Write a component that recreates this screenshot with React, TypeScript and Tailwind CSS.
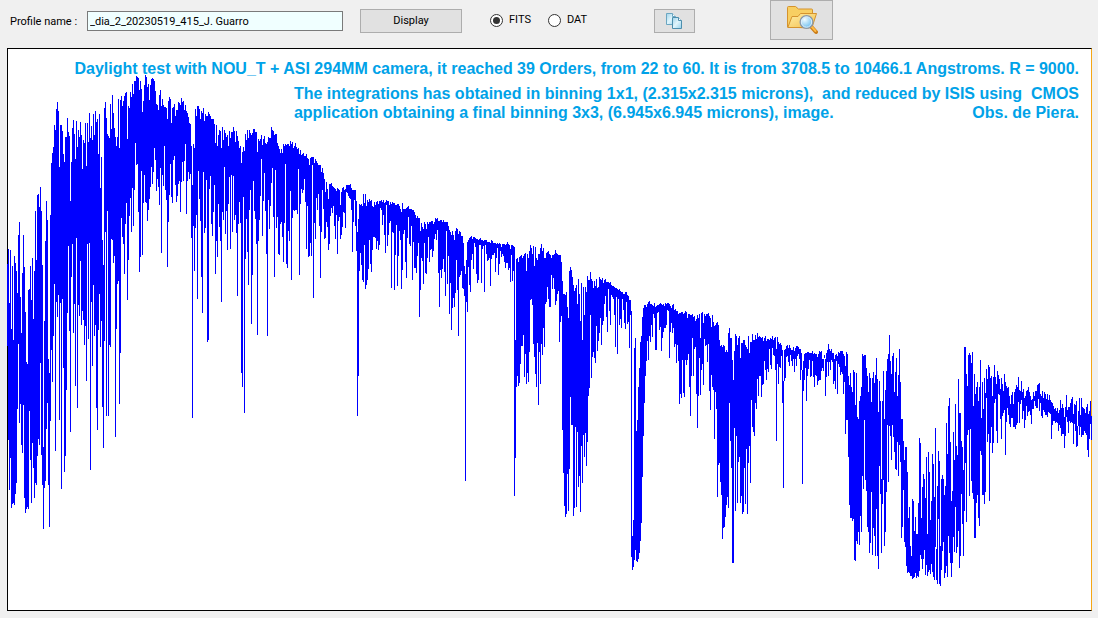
import React, { useState } from "react";

const START_X = 7;

// One "low,high" pair of y values for each column of the spectrum.
const SPECTRUM = `
264,346 249,440 303,490 250,458 329,508 266,504 340,503 256,505 263,494 271,483
293,409 235,344 222,423 297,404 333,445 273,453 235,405 267,498 312,513 362,509
364,507 290,509 289,411 266,460 300,503 258,443 319,468 271,498 211,483 260,485
195,456 194,439 207,445 187,363 211,455 265,485 447,529 321,488 241,481 201,429
220,403 359,485 373,527 215,421 163,350 153,382 147,336 125,284 130,451 109,302
102,317 111,295 167,420 125,303 125,489 131,299 154,368 162,472 137,456 137,390
118,313 132,246 136,331 201,432 162,277 128,244 120,333 134,304 159,386 121,238
147,408 130,305 137,316 122,261 135,325 169,311 140,320 143,345 123,326 166,381
123,244 142,339 113,243 138,470 126,302 140,366 114,285 135,336 111,325 122,408
119,430 154,330 114,294 188,347 157,321 240,407 265,448 108,341 102,232 118,416
134,211 136,416 138,345 104,347 129,239 95,240 113,263 128,256 137,437 146,329
137,284 99,281 148,404 100,353 96,218 106,237 101,244 96,274 93,224 92,203
139,300 106,260 108,216 92,198 97,232 84,188 94,226 81,190 81,143 76,165
77,164 78,212 90,272 81,257 89,171 112,255 101,203 85,175 75,202 77,203
87,221 84,210 100,199 85,187 79,167 78,184 79,172 81,148 91,160 104,191
105,179 110,187 95,205 90,168 106,253 99,175 105,186 107,146 107,190 108,200
119,267 101,222 97,195 99,164 123,197 108,203 107,160 104,156 116,185 110,202
110,196 102,184 103,181 105,212 98,182 102,162 101,181 110,161 105,144 111,214
113,181 117,172 123,179 124,174 146,238 185,418 144,226 148,271 109,228 116,215
106,299 106,171 109,199 119,221 111,277 113,313 108,172 121,233 114,228 116,180
116,342 112,340 114,189 116,176 119,224 119,236 119,212 124,185 143,274 125,241
146,257 135,204 130,227 131,241 148,302 127,212 140,220 130,167 133,234 137,211
135,250 146,204 131,177 138,249 132,175 132,232 127,176 131,220 142,215 131,233
136,296 141,224 148,202 146,223 163,373 152,387 147,197 151,413 134,259 140,219
130,252 138,285 130,210 133,190 135,324 133,275 129,181 129,211 132,219 132,244
152,335 139,241 141,220 139,196 135,159 145,236 139,201 136,173 143,211 144,254
142,336 137,200 138,229 138,206 127,183 130,168 131,217 135,277 134,170 134,228
143,217 146,254 149,255 153,224 149,222 153,237 144,262 146,223 144,164 145,264
144,268 144,231 146,241 141,191 144,280 142,218 148,210 146,211 143,210 147,210
149,214 148,169 154,275 150,204 155,189 154,193 153,190 156,179 156,202 154,249
158,206 159,257 165,256 158,243 157,256 157,165 157,298 163,223 159,239 161,198
163,210 165,194 165,226 165,278 172,232 168,190 173,209 179,239 192,238 182,222
189,227 199,250 184,244 184,216 183,208 186,213 187,206 188,226 189,239 191,215
188,254 189,221 190,217 205,239 192,235 188,227 187,212 190,213 189,228 185,192
185,193 185,196 185,198 184,199 188,210 190,252 190,222 190,200 190,226 201,251
232,416 219,376 204,271 205,253 204,265 206,280 194,282 203,245 194,289 206,285
200,280 202,269 199,240 201,264 200,272 206,250 207,237 202,237 205,238 202,249
201,241 204,250 201,245 201,208 200,210 202,225 200,215 203,235 202,253 200,205
201,246 201,235 205,223 202,221 204,288 202,232 203,233 203,290 205,255 205,225
204,286 204,256 206,231 209,240 212,289 203,270 209,234 209,230 209,262 208,278
207,238 206,217 209,244 209,246 209,226 210,280 210,242 212,268 215,268 218,273
216,256 218,243 218,317 231,290 223,258 227,261 229,284 222,243 224,273 229,274
222,258 224,237 222,262 222,250 221,249 221,257 224,251 222,239 218,234 219,240
218,230 221,273 221,307 220,270 220,278 222,269 220,259 222,272 222,296 222,231
222,284 226,256 230,314 232,283 235,330 231,308 235,298 240,307 231,293 228,260
229,290 234,336 231,277 232,275 236,271 236,288 243,289 266,296 274,481 260,302
242,312 240,267 238,285 237,292 236,260 239,254 237,269 237,243 238,247 239,274
239,283 240,280 239,245 238,245 240,283 240,249 241,246 240,292 240,245 240,254
242,261 242,260 242,258 243,286 240,259 241,255 243,255 243,253 243,272 244,258
243,248 244,275 243,264 244,251 247,257 244,254 244,256 244,262 245,268 244,263
242,263 244,270 245,268 249,282 245,255 245,281 246,271 247,496 340,458 259,387
258,376 262,386 257,383 256,364 255,346 258,346 256,335 254,377 253,354 271,384
254,373 258,382 251,352 245,300 248,299 254,305 246,344 266,357 247,374 258,387
260,343 254,405 254,352 248,384 244,344 251,355 248,328 258,347 258,304 253,302
252,287 251,299 254,307 255,307 258,275 255,289 255,278 254,289 250,305 253,301
254,294 255,291 255,342 255,322 262,316 281,430 294,473 294,506 295,517 292,514
307,474 318,511 271,469 267,397 270,425 277,425 285,516 291,508 288,427 285,507
304,432 279,487 294,476 321,512 283,446 340,483 287,435 315,457 287,433 292,466
276,442 280,396 280,388 272,315 279,378 281,357 288,352 281,358 286,363 279,326
288,351 287,341 277,333 279,318 280,345 278,325 283,321 280,304 279,296 282,317
282,332 282,289 283,311 282,325 285,295 286,297 286,299 287,315 288,347 288,297
289,354 290,299 289,325 291,319 292,328 292,299 294,310 294,323 292,329 292,302
295,324 296,322 300,348 300,315 311,557 536,570 520,567 348,560 338,550 431,561
420,562 387,559 368,553 342,541 336,523 317,477 308,436 305,403 305,376 307,361
304,341 302,360 301,336 304,342 304,325 305,337 306,314 303,318 307,350 306,350
305,313 305,312 304,330 303,327 304,351 305,338 304,332 306,328 303,328 304,325
303,310 303,311 304,358 306,332 308,323 305,333 304,328 310,347 309,344 311,363
311,345 314,361 313,404 313,394 312,398 312,360 314,393 313,397 311,360 312,365
318,360 314,354 314,387 315,416 315,376 314,338 317,376 316,349 321,347 319,394
315,428 318,396 314,358 338,395 313,370 312,364 323,385 314,339 316,346 314,345
314,362 313,344 316,391 318,410 327,375 315,387 322,390 326,439 325,392 323,409
322,497 325,465 340,463 346,482 345,495 347,539 345,528 346,527 352,517 350,505
352,497 333,508 328,403 338,441 338,468 360,563 380,563 351,428 334,511 336,436
345,503 338,462 336,457 358,503 343,496 343,514 340,512 340,468 345,504 347,449
349,514 336,463 353,446 342,483 342,400 334,427 340,432 340,436 335,403 339,409
333,379 337,396 336,376 337,376 338,397 337,385 341,384 338,361 336,370 341,380
339,369 339,372 340,349 338,365 339,369 336,348 340,355 338,356 337,370 349,441
337,364 342,384 344,367 343,368 345,356 350,403 381,488 350,381 349,378 346,357
345,356 348,362 345,366 348,355 350,361 350,366 347,359 351,372 348,359 346,366
346,356 347,354 349,359 349,380 353,370 370,484 361,391 354,380 353,368 353,401
352,376 352,369 353,360 353,377 353,376 351,361 354,377 353,387 354,375 354,376
357,385 354,381 351,380 352,380 351,371 359,368 359,371 355,358 359,396 353,377
350,362 344,376 349,362 351,370 349,360 353,362 353,384 359,381 355,389 354,361
356,394 352,364 353,367 351,375 351,372 351,374 354,394 356,382 366,434 352,420
354,420 376,457 385,505 373,518 387,518 392,521 370,519 372,560 405,561 373,541
417,544 419,532 401,545 396,516 387,532 354,476 356,489 355,420 355,480 368,491
376,527 392,532 373,553 378,543 402,492 378,555 372,528 383,536 375,556 358,509
379,556 412,569 381,466 401,494 479,553 401,504 371,480 419,546 390,532 371,492
359,425 354,482 335,426 361,436 374,460 356,425 353,437 392,452 372,469 358,470
396,442 375,476 349,445 382,462 419,538 419,527 441,490 460,542 447,547 447,566
472,573 518,572 507,573 546,576 556,576 499,579 501,578 531,577 517,573 534,578
534,576 503,577 438,571 443,555 518,559 487,569 474,559 479,550 498,575 457,565
534,576 452,572 472,570 520,574 501,564 454,572 464,577 497,580 428,547 549,580
486,584 451,519 461,584 546,586 479,570 475,551 479,542 495,578 486,573 423,566
454,577 406,536 398,553 442,563 501,577 491,563 432,537 460,552 404,507 446,553
455,547 379,531 413,568 413,556 441,494 447,524 470,556 347,511 347,463 374,522
386,435 355,430 353,496 355,429 363,481 352,493 406,499 374,538 394,538 387,503
382,495 401,518 387,526 360,451 418,455 382,495 409,495 378,504 393,492 369,398
379,442 365,434 367,501 378,443 376,427 396,453 377,443 365,403 377,399 384,431
371,443 375,394 379,395 389,419 378,439 384,416 391,413 374,410 382,455 386,422
388,408 387,415 396,424 404,427 395,418 392,418 404,427 392,427 389,429 385,425
387,423 377,402 390,423 391,404 381,400 392,419 389,411 398,428 396,420 391,406
390,416 387,412 392,411 396,415 400,424 399,409 392,409 396,401 391,406 391,408
385,408 384,399 383,411 394,403 396,416 391,418 398,410 392,412 394,415 399,415
394,417 400,412 395,413 400,414 402,439 403,425 406,421 409,421 408,423 411,422
408,423 413,431 410,425 400,428 408,436 404,434 408,434 417,448 407,436 395,417
410,422 407,433 407,421 403,423 399,422 397,423 414,444 404,424 405,431 401,447
426,446 411,426 398,435 415,427 398,437 407,435 408,435 409,431 413,433 407,435
404,450 414,457 411,439 401,424 416,440
`;

const TRACE = SPECTRUM.trim()
  .split(/\s+/)
  .map((pair, i) => {
    const [top, bottom] = pair.split(",");
    return `M${START_X + i} ${top}h1V${bottom}h-1z`;
  })
  .join("");

function CopyIcon() {
  return (
    <svg viewBox="0 0 17 17" className="h-[17px] w-[17px]" aria-hidden="true">
      <defs>
        <linearGradient id="sheet" x1="0" y1="0" x2="1" y2="1">
          <stop offset="0" stopColor="#a0d2e8" />
          <stop offset="0.5" stopColor="#e0f5fc" />
          <stop offset="1" stopColor="#93d0ec" />
        </linearGradient>
      </defs>
      <path d="M.5.5h6l3 3v8h-9z" fill="url(#sheet)" stroke="#6ba6c1" />
      <path d="M6.500.500v3h3" fill="#fff" stroke="#6ba6c1" />
      <path d="M6.500 4.500h6l3 3v8h-9z" fill="url(#sheet)" stroke="#4d8ead" />
      <path d="M12.500 4.500v3h3" fill="#fff" stroke="#4d8ead" />
    </svg>
  );
}

function FolderSearchIcon() {
  return (
    <svg viewBox="0 0 32 30" className="h-[30px] w-8" aria-hidden="true">
      <defs>
        <linearGradient id="folder" x1="0" y1="0" x2="1" y2="1">
          <stop offset="0" stopColor="#fff0a8" />
          <stop offset="1" stopColor="#f3bd4a" />
        </linearGradient>
        <radialGradient id="lens" cx="0.35" cy="0.3" r="0.8">
          <stop offset="0" stopColor="#f2fcff" />
          <stop offset="1" stopColor="#59b5ec" />
        </radialGradient>
      </defs>
      <path d="M1.500 22V2.500q0-1 1-1h7l3 2.500h13q1 0 1 1v5l-3 13z" fill="#f8cf62" stroke="#d5932d" />
      <path d="M1.800 22.500 6 11.500h6l2.500-3h16l-4.500 14z" fill="url(#folder)" stroke="#d5932d" />
      <path d="m25.500 22 4.500 5" stroke="#ca7d19" strokeWidth="4" strokeLinecap="round" />
      <path d="m26 22 3.500 4" stroke="#ffba43" strokeWidth="2" strokeLinecap="round" />
      <circle cx="20.500" cy="17" r="6.300" fill="url(#lens)" stroke="#8b99a8" strokeWidth="1.500" />
      <circle cx="20.500" cy="17" r="5.200" fill="none" stroke="#dceefa" />
    </svg>
  );
}

function FormatOption({
  value,
  checked,
  onSelect,
}: {
  value: string;
  checked: boolean;
  onSelect: (value: string) => void;
}) {
  return (
    <label className="flex w-[42px] items-center gap-[6px]">
      <input
        type="radio"
        name="format"
        value={value}
        checked={checked}
        onChange={() => onSelect(value)}
        className="grid h-[13px] w-[13px] shrink-0 appearance-none place-items-center rounded-full border border-[#333333] bg-white before:h-[7px] before:w-[7px] before:rounded-full checked:before:bg-[#333333]"
      />
      {value}
    </label>
  );
}

export default function App() {
  const [name, setName] = useState("_dia_2_20230519_415_J. Guarro");
  const [format, setFormat] = useState("FITS");

  return (
    <main className="flex min-h-screen flex-col bg-[#f0f0f0] pr-[6px] pb-[7px] pl-[7px] font-['Roboto','Liberation_Sans',sans-serif] text-[11px] leading-4 text-black">
      <form className="flex h-12 items-start" onSubmit={(e) => e.preventDefault()}>
        <label htmlFor="profile" className="mt-[14px] w-20 shrink-0 pl-[3px]">
          Profile name :
        </label>
        <input
          id="profile"
          value={name}
          onChange={(e) => setName(e.target.value)}
          className="mt-[11px] h-5 w-64 border border-[#7a7a7a] bg-[#f0ffff] px-[2px]"
        />
        <button className="mt-[9px] ml-[17px] h-6 w-[102px] border border-[#adadad] bg-[#e1e1e1]">
          Display
        </button>
        <fieldset className="mt-3 ml-7 flex gap-4">
          <FormatOption value="FITS" checked={format === "FITS"} onSelect={setFormat} />
          <FormatOption value="DAT" checked={format === "DAT"} onSelect={setFormat} />
        </fieldset>
        <button
          aria-label="Copy"
          className="mt-[9px] ml-16 flex h-6 w-[41px] items-center justify-center border border-[#adadad] bg-[#e1e1e1]"
        >
          <CopyIcon />
        </button>
        <button
          aria-label="Browse files"
          className="ml-[75px] flex h-10 w-[63px] items-center justify-center border border-[#adadad] bg-[#e1e1e1]"
        >
          <FolderSearchIcon />
        </button>
      </form>

      <section className="relative flex-1 border border-black border-r-[#f5a614] bg-white">
        <svg
          viewBox="7 48 1085 563"
          preserveAspectRatio="none"
          shapeRendering="crispEdges"
          className="absolute -top-px -left-px h-[calc(100%+2px)] w-[calc(100%+2px)]"
          role="img"
          aria-label="Spectrum profile"
        >
          <path d={TRACE} fill="#0000ff" />
        </svg>
        <div className="absolute top-[10px] right-3 font-['Liberation_Sans',Arial,sans-serif] text-[16px] leading-[19px] font-bold whitespace-pre text-[#00a2e8]">
          <h1>
            Daylight test with NOU_T + ASI 294MM camera, it reached 39 Orders, from 22 to 60. It is from 3708.5 to 10466.1 Angstroms. R = 9000.
          </h1>
          <div className="mt-[6px] ml-auto w-fit">
            <p>The integrations has obtained in binning 1x1, (2.315x2.315 microns),  and reduced by ISIS using  CMOS</p>
            <p className="flex justify-between">
              <span>application obtaining a final binning 3x3, (6.945x6.945 microns), image.</span>
              <span>Obs. de Piera.</span>
            </p>
          </div>
        </div>
      </section>
    </main>
  );
}
